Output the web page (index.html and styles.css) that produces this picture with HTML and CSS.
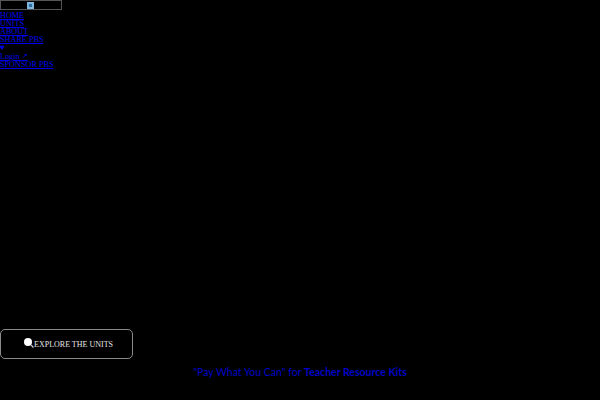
FILE: index.html
```html
<!DOCTYPE html>
<html lang="en">
<head>
  <meta charset="UTF-8">
  <meta name="viewport" content="width=device-width, initial-scale=1.0">
  <title>PBS Teacher Resources</title>
  <link rel="stylesheet" href="styles.css">
</head>
<body>
  <div class="page">
    <header class="site-header">
      <a class="logo-box" href="#">
        <svg class="logo-icon" width="7" height="7" viewBox="0 0 7 7">
          <rect width="7" height="7" fill="#7fb4dc"/>
          <rect x="2" y="2" width="3" height="3" fill="#2f6f9f"/>
        </svg>
      </a>
      <nav class="site-nav">
        <a href="#">HOME</a>
        <a href="#">UNITS</a>
        <a href="#">ABOUT</a>
        <a href="#">SHARE PBS</a>
        <a class="heart" href="#">&#9829;</a>
        <a href="#">Login <span class="arrow">&#8599;</span></a>
        <a href="#">SPONSOR PBS</a>
      </nav>
    </header>
    <main class="hero">
      <a class="explore-button" href="#">
        <svg class="search-icon" width="10" height="10" viewBox="0 0 10 10">
          <circle cx="4" cy="4" r="4" fill="#fff"/>
          <path d="M7 7 L9.5 9.5" stroke="#ccc" stroke-width="1.2"/>
        </svg>
        <span>EXPLORE THE UNITS</span>
      </a>
      <p class="kit-note">"Pay What You Can" for <strong>Teacher Resource Kits</strong></p>
    </main>
  </div>
</body>
</html>
```

FILE: styles.css
```css
html, body {
  margin: 0;
  height: 100%;
  background-color: #000;
}

.page {
  height: 400px;
  display: flex;
  flex-direction: column;
  font-family: "Liberation Serif", serif;
  font-size: 8.2px;
  overflow: hidden;
}

a {
  color: #0000ee;
}

.logo-box {
  width: 58px;
  height: 8px;
  padding-right: 2px;
  border: 1px solid #555;
  display: flex;
  justify-content: center;
  align-items: center;
  margin-bottom: 2px;
}

.site-nav {
  display: flex;
  flex-direction: column;
  align-items: flex-start;
  line-height: 8px;
}

.heart {
  text-decoration: none;
}

.arrow {
  font-size: 7px;
  vertical-align: 1px;
}

.hero {
  margin-top: auto;
  padding-bottom: 21px;
}

.explore-button {
  box-sizing: border-box;
  width: 133px;
  height: 30px;
  padding-left: 4px;
  border: 1px solid #8a8a8a;
  border-radius: 5px;
  display: flex;
  justify-content: center;
  align-items: center;
  color: #e6e6e6;
  font-size: 8px;
  text-decoration: none;
}

.search-icon {
  margin-bottom: 3px;
}

.kit-note {
  margin: 7px 0 0;
  text-align: center;
  color: #0000c8;
  font-family: Lato, sans-serif;
  font-size: 10.5px;
  line-height: 13px;
}
```
